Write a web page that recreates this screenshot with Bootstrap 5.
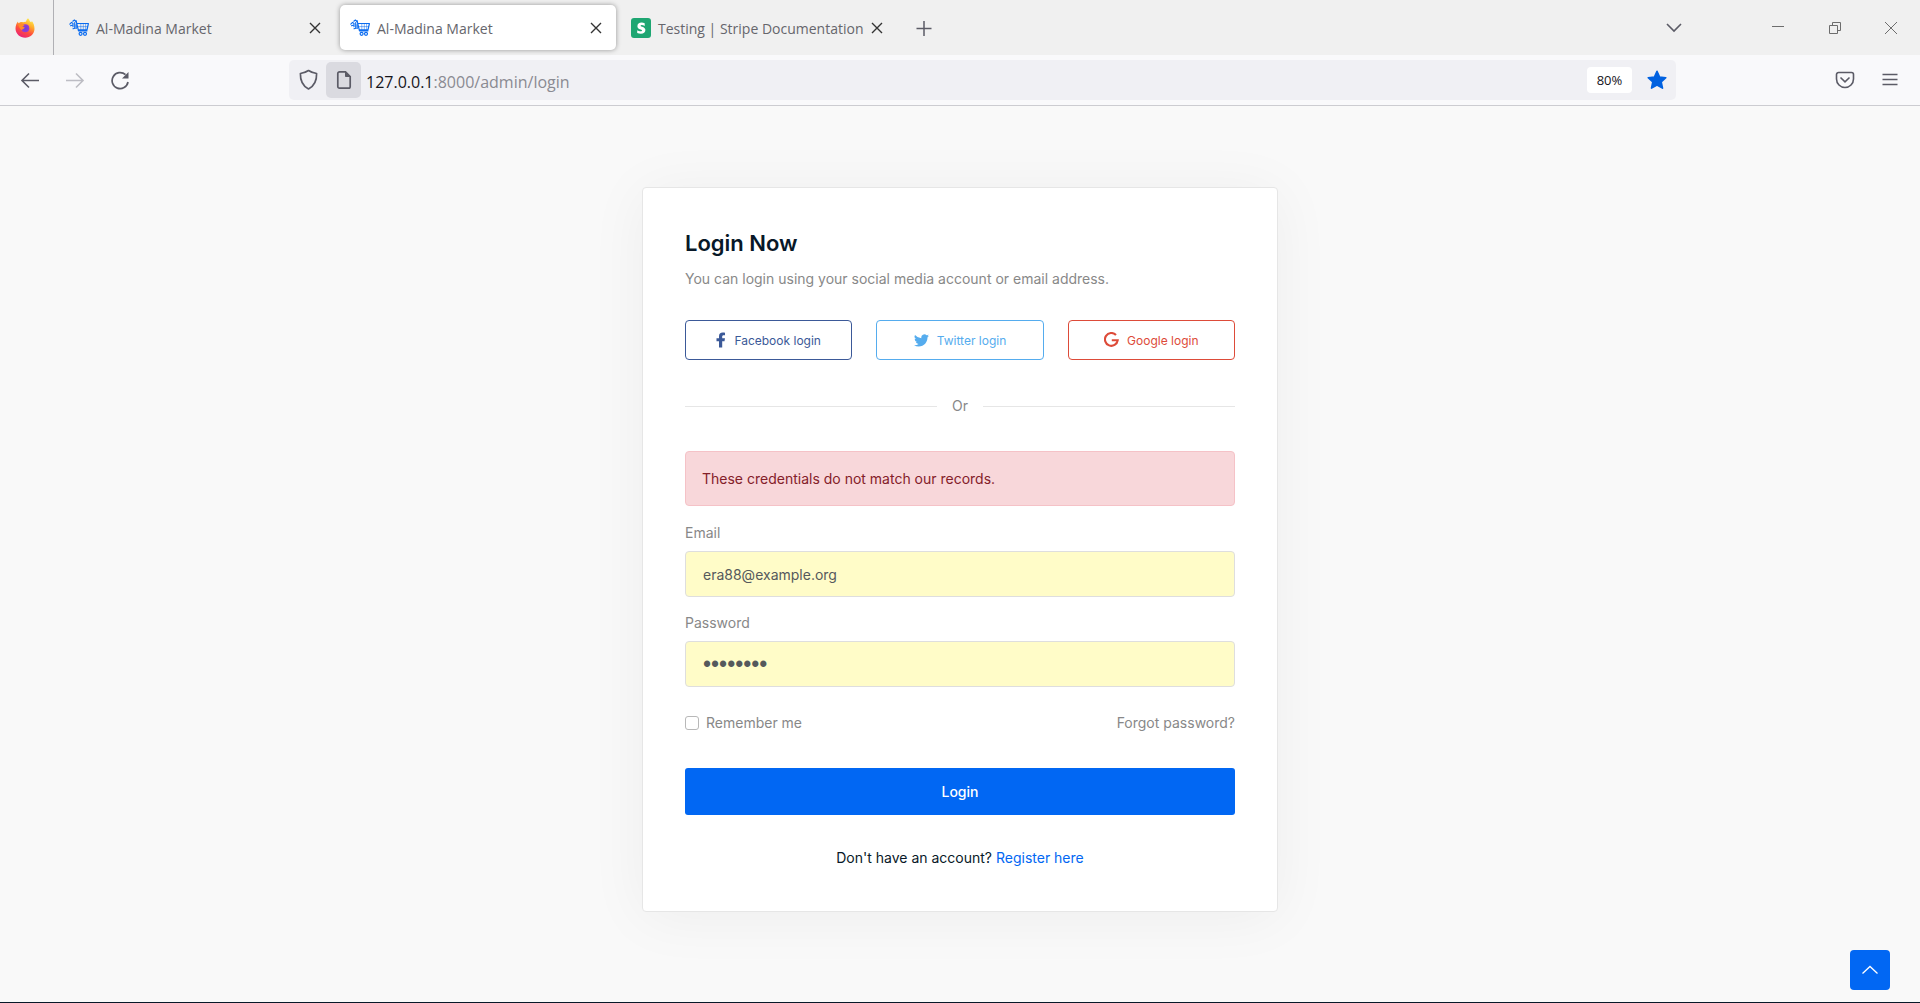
<!DOCTYPE html>
<html lang="en">
<head>
<meta charset="utf-8">
<meta name="viewport" content="width=device-width, initial-scale=1">
<title>Al-Madina Market</title>
<link href="https://cdn.jsdelivr.net/npm/bootstrap@5.3.0/dist/css/bootstrap.min.css" rel="stylesheet">
<style>
  body { font-family: Inter, "Liberation Sans", sans-serif; font-size: 14px; line-height: 22px; color: #888; background: #f9f9f9; border-bottom: 1px solid #081828; }
  svg { display: block; flex: none; }
  .chrome-ui { font-family: "Open Sans", "Noto Sans", sans-serif; color: #5b5b66; }
  .bare-btn { background: none; border: 0; padding: 0; color: inherit; display: flex; align-items: center; justify-content: center; }
  .tab-strip { height: 55px; background: #f0f0f0; }
  .pinned-tab { width: 54px; padding-right: 4px; border-right: 1px solid #b0b0b4; }
  .tab-list { gap: 5px; padding-left: 5px; }
  .browser-tab { width: 276px; height: 45px; padding: 0 13px 0 10px; border-radius: 5px; font-size: 14px; color: #66666c; }
  .browser-tab.is-active { background: #fff; box-shadow: 0 0 5px rgba(0,0,0,.38); }
  .tab-name { padding: 2px 0 0 7px; }
  .tab-close { color: #333; }
  .win-controls { gap: 36px; padding-right: 19px; color: #6d6d6d; }
  .tool-strip { height: 51px; background: #f9f9fb; border-bottom: 1px solid #ccccd1; padding: 0 20px; }
  .nav-set { width: 269px; gap: 25px; }
  .tool-set { width: 224px; gap: 25px; }
  .url-box { height: 40px; background: #f0f0f4; border-radius: 5px; }
  .shield-btn { width: 37px; padding-left: 2px; }
  .site-info { width: 35px; height: 36px; background: #dadae0; border-radius: 5px; }
  .url-text { font-size: 16px; color: #8a8a92; padding: 3px 0 0 5px; }
  .url-text b { font-weight: 400; color: #15141a; }
  .zoom-chip { width: 45px; height: 26px; background: #fff; border-radius: 4px; font-size: 13px; color: #15141a; }
  .star-btn { width: 44px; padding-left: 6px; }
  .page-main { padding: 81px 12px 40px; }
  .login-card { width: 100%; max-width: 636px; border: 1px solid #e6e6e6; border-radius: 4px; padding: 42px; box-shadow: 0 5px 60px rgba(0,0,0,.05); background: #fff; }
  .login-title { font-size: 22px; line-height: 26px; font-weight: 600; color: #081828; margin-bottom: 12px; }
  .social-row { gap: 24px; margin: 30px 0 35px; }
  .social-btn { flex: 1 1 0; height: 40px; font-size: 12px; gap: 8px; border: 1px solid currentColor; border-radius: 4px; text-decoration: none; }
  .social-btn span { padding-top: 1px; }
  .fb { color: #3b5998; } .tw { color: #55acee; } .gg { color: #dd4b39; }
  .or-line { gap: 15px; margin-bottom: 34px; }
  .or-line::before, .or-line::after { content: ""; flex: 1; height: 1px; background: #e6e6e6; }
  .login-error { padding: 16px; border-radius: 4px; margin-bottom: 16px; line-height: 21px; background: #f8d7da; border: 1px solid #f5c2c7; color: #842029; }
  .field-label { margin-bottom: 7px; }
  .field-box.form-control { height: 46px; padding: 0 17px; font-size: 14px; color: #55595c; background: #fffcc8; border: 1px solid #dedede; border-radius: 4px; margin-bottom: 15px; }
  .field-box.form-control[type="password"] { font-family: "Liberation Sans", sans-serif; font-size: 23px; }
  .remember-row { margin: 25px 0 34px; }
  .remember-row input.form-check-input { width: 14px; height: 14px; margin: 0 7px 0 0; border-color: #b8b8b8; border-radius: 3px; }
  .login-btn { height: 47px; font-size: 14px; font-weight: 500; color: #fff; background: #0167f3; border: 0; border-radius: 3px; margin-bottom: 32px; }
  .register-note { color: #081828; }
  .accent-link { color: #0167f3; }
  .to-top { position: fixed; right: 30px; bottom: 13px; width: 40px; height: 40px; color: #fff; background: #0167f3; border-radius: 4px; }
</style>
</head>
<body class="d-flex flex-column min-vh-100">
<svg width="0" height="0" class="position-absolute" aria-hidden="true">
  <defs>
    <symbol id="i-x" viewBox="0 0 14 14"><path d="M2 2l10 10M12 2L2 12" fill="none" stroke="currentColor" stroke-width="1.4"/></symbol>
    <symbol id="i-cart" viewBox="0 0 20 20">
      <g fill="none" stroke="#0b6cf0" stroke-linecap="round" stroke-linejoin="round">
        <path d="M8.500 5.500H19.400L18 11.800H9.500M7 2.500l2.500 10.300h8.500" stroke-width="1.200"/>
        <path d="M11.800 5.500v6M14.300 5.500v6M16.600 5.500v6M9 8.600h9.500" stroke-width=".5"/>
        <path d="M.8 6.200l1.700-1.800 1.200.8M1.500 7.800l1.700-.6M3.800 3.200l1.600-1.200 1.600 1.600M4 5.200v3.600M5.700 4.500v5.200M4 10.800l2-.6M7.200 6.500v4" stroke-width="1.100"/>
        <circle cx="11.600" cy="15.800" r="1.500" stroke-width="1.200"/><circle cx="16" cy="15.800" r="1.500" stroke-width="1.200"/>
      </g>
    </symbol>
  </defs>
</svg>

<header class="chrome-ui">
  <div class="tab-strip d-flex align-items-center">
    <button class="bare-btn pinned-tab h-100" aria-label="Firefox View">
      <svg width="20" height="20" viewBox="0 0 20 20">
        <defs>
          <linearGradient id="ff-a" x1=".8" y1="0" x2=".3" y2="1"><stop offset="0" stop-color="#fff44f"/><stop offset=".35" stop-color="#ffa92b"/><stop offset=".65" stop-color="#ff4f3d"/><stop offset="1" stop-color="#e91e7a"/></linearGradient>
          <radialGradient id="ff-b"><stop offset="0" stop-color="#6b3fe0"/><stop offset="1" stop-color="#9a3bd0"/></radialGradient>
        </defs>
        <path d="M13 .3c1 1 1.600 2.200 2 3.200l1.300.8.600-1.300c1.700 2 2.600 4.800 2.600 8-.2 5-4.200 8.700-9.300 8.700S.6 15.700.5 10.700C.500 8 1.300 5.600 3 3.600c0 .8.200 1.300.6 1.700C5 4 7 3.800 8 4.300c1.300-.5 2-.8 3-.5C11.300 2.300 12 1.200 13 .3z" fill="url(#ff-a)"/>
        <circle cx="10.300" cy="10.300" r="4" fill="url(#ff-b)"/>
        <path d="M3.200 6.500C5.500 5 8 5.600 9.500 7.500c-1 .2-1.700.8-2.200 1.300 1.200 0 2 .4 2.400 1-.8 1.500-2.300 1.300-3.200 2.200-1.500-1-2.500-3-3.300-5.500z" fill="#ff8a2a"/>
      </svg>
    </button>
    <nav class="tab-list d-flex align-items-center" aria-label="Tabs">
      <div class="browser-tab d-flex align-items-center">
        <svg width="20" height="20"><use href="#i-cart"/></svg><span class="tab-name flex-grow-1 text-nowrap">Al-Madina Market</span>
        <button class="bare-btn tab-close" aria-label="Close tab"><svg width="14" height="14"><use href="#i-x"/></svg></button>
      </div>
      <div class="browser-tab is-active d-flex align-items-center">
        <svg width="20" height="20"><use href="#i-cart"/></svg><span class="tab-name flex-grow-1 text-nowrap">Al-Madina Market</span>
        <button class="bare-btn tab-close" aria-label="Close tab"><svg width="14" height="14"><use href="#i-x"/></svg></button>
      </div>
      <div class="browser-tab d-flex align-items-center">
        <svg width="20" height="20" viewBox="0 0 20 20"><rect width="20" height="20" rx="3" fill="#1ea672"/><path d="M13.700 5.200v2.700c-1-.5-2-.8-3-.8-.7 0-1.100.2-1.100.6 0 1.300 4.800.9 4.800 4.400 0 2.400-1.800 3.700-4.500 3.700-1.300 0-2.600-.3-3.700-.8v-2.800c1.100.6 2.500 1.100 3.600 1.100.8 0 1.300-.2 1.300-.7 0-1.500-4.700-1-4.700-4.400 0-2.200 1.700-3.600 4.200-3.600 1.100 0 2.100.2 3.100.6z" fill="#fff"/></svg><span class="tab-name flex-grow-1 text-nowrap">Testing | Stripe Documentation</span>
        <button class="bare-btn tab-close" aria-label="Close tab"><svg width="14" height="14"><use href="#i-x"/></svg></button>
      </div>
    </nav>
    <button class="bare-btn ms-3" aria-label="New tab"><svg width="22" height="22" viewBox="0 0 22 22"><path d="M11 4v15M3.500 11.500h15" fill="none" stroke="currentColor" stroke-width="1.500"/></svg></button>
    <div class="win-controls d-flex align-items-center ms-auto">
      <button class="bare-btn me-5" aria-label="List all tabs"><svg width="20" height="20" viewBox="0 0 20 20"><path d="M2 6l7 7 7-7" fill="none" stroke="#5b5b66" stroke-width="1.600"/></svg></button>
      <button class="bare-btn" aria-label="Minimize"><svg width="20" height="20" viewBox="0 0 20 20"><path d="M3 8.500h12" stroke="currentColor"/></svg></button>
      <button class="bare-btn" aria-label="Restore"><svg width="20" height="20" viewBox="0 0 20 20"><path d="M4.500 7.500h8v8h-8zM7.500 7.500v-3h8v8h-3" fill="none" stroke="currentColor"/></svg></button>
      <button class="bare-btn" aria-label="Close window"><svg width="20" height="20" viewBox="0 0 20 20"><path d="M4 4l12 12M16 4L4 16" fill="none" stroke="currentColor"/></svg></button>
    </div>
  </div>

  <div class="tool-strip d-flex align-items-center">
    <div class="nav-set d-flex align-items-center flex-shrink-0">
      <button class="bare-btn" aria-label="Back"><svg width="20" height="20" viewBox="0 0 20 20"><path d="M19 10.500H2M9 3.500l-7 7 7 7" fill="none" stroke="currentColor" stroke-width="1.600"/></svg></button>
      <button class="bare-btn" aria-label="Forward"><svg width="20" height="20" viewBox="0 0 20 20"><path d="M1 10.500h17M11 3.500l7 7-7 7" fill="none" stroke="#bdbdc4" stroke-width="1.600"/></svg></button>
      <button class="bare-btn" aria-label="Reload"><svg width="20" height="20" viewBox="0 0 20 20"><path d="M18 12A8 8 0 1 1 15.500 4.700" fill="none" stroke="currentColor" stroke-width="1.700"/><path d="M18.500 2V8.500H12z" fill="currentColor"/></svg></button>
    </div>
    <div class="url-box d-flex align-items-center flex-grow-1">
      <button class="bare-btn shield-btn" aria-label="Tracking protection"><svg width="21" height="22" viewBox="0 0 21 22"><path d="M10.500 1.500c2.500 1.700 5 2.600 8.100 3 .2 6.500-2 12.300-8.100 15.500C4.400 16.800 2.200 11 2.400 4.500c3.100-.4 5.600-1.300 8.100-3z" fill="none" stroke="currentColor" stroke-width="1.700" stroke-linejoin="round"/></svg></button>
      <button class="bare-btn site-info" aria-label="Site information"><svg width="16" height="20" viewBox="0 0 16 20"><path d="M3.500 1.800H9.500L14.200 6.500V16.500a1.700 1.700 0 0 1-1.700 1.700h-9A1.700 1.700 0 0 1 1.800 16.500V3.500A1.700 1.700 0 0 1 3.500 1.800z" fill="none" stroke="currentColor" stroke-width="1.700"/><path d="M9.500 2V6.500h4.700z" fill="currentColor" stroke="currentColor"/></svg></button>
      <span class="url-text flex-grow-1"><b>127.0.0.1</b>:8000/admin/login</span>
      <button class="bare-btn zoom-chip" aria-label="Reset zoom level">80%</button>
      <button class="bare-btn star-btn" aria-label="Bookmark"><svg width="20" height="20" viewBox="0 0 20 20"><path d="M10 1.300l2.600 5.700 6.200.7-4.600 4.200 1.300 6.200L10 15l-5.500 3.100 1.300-6.200L1.200 7.700l6.200-.7z" fill="#0061e0" stroke="#0061e0" stroke-width="1.600" stroke-linejoin="round"/></svg></button>
    </div>
    <div class="tool-set d-flex align-items-center justify-content-end flex-shrink-0">
      <button class="bare-btn" aria-label="Save to Pocket"><svg width="20" height="20" viewBox="0 0 20 20"><path d="M3.500 2.500h13a2 2 0 0 1 2 2V9a8.500 8.500 0 0 1-17 0V4.500a2 2 0 0 1 2-2z" fill="none" stroke="currentColor" stroke-width="1.600"/><path d="M5.500 7.500L10 11.800l4.500-4.300" fill="none" stroke="currentColor" stroke-width="1.600"/></svg></button>
      <button class="bare-btn" aria-label="Menu"><svg width="20" height="20" viewBox="0 0 20 20"><path d="M2.500 4.500h15M2.500 9.500h15M2.500 14.500h15" stroke="currentColor" stroke-width="1.500"/></svg></button>
    </div>
  </div>
</header>

<main class="page-main d-flex flex-grow-1 justify-content-center align-items-start">
  <form class="login-card" onsubmit="return false">
    <h1 class="login-title">Login Now</h1>
    <p class="mb-0">You can login using your social media account or email address.</p>
    <div class="social-row d-flex">
      <a class="social-btn fb d-flex align-items-center justify-content-center" href="#"><svg width="10" height="16" viewBox="0 0 10 16"><path d="M3 15.500V9.300H.500V6.300H3V4.200C3 1.800 4.400.500 6.700.500c1 0 2.300.2 2.300.2v2.500H7.700C6.600 3.200 6.200 3.800 6.200 4.500v1.800H9L8.500 9.300H6.200v6.200z" fill="currentColor"/></svg><span>Facebook login</span></a>
      <a class="social-btn tw d-flex align-items-center justify-content-center" href="#"><svg width="15" height="16" viewBox="0 0 16 16"><path d="M5.026 15c6.038 0 9.341-5.003 9.341-9.334q.002-.211-.006-.422A6.700 6.700 0 0 0 16 3.542a6.700 6.700 0 0 1-1.889.518 3.300 3.300 0 0 0 1.447-1.817 6.500 6.500 0 0 1-2.087.793A3.286 3.286 0 0 0 7.875 6.030a9.320 9.320 0 0 1-6.767-3.429 3.290 3.290 0 0 0 1.018 4.382A3.300 3.300 0 0 1 .640 6.575v.045a3.290 3.290 0 0 0 2.632 3.218 3.200 3.200 0 0 1-.865.115 3 3 0 0 1-.614-.057 3.280 3.280 0 0 0 3.067 2.277A6.600 6.600 0 0 1 .780 13.580a6 6 0 0 1-.780-.045A9.340 9.340 0 0 0 5.026 15" fill="currentColor"/></svg><span>Twitter login</span></a>
      <a class="social-btn gg d-flex align-items-center justify-content-center" href="#"><svg width="15" height="16" viewBox="0 0 15 16"><path d="M12 3A6.400 6.400 0 1 0 13.700 8.300H7.800" fill="none" stroke="currentColor" stroke-width="2.100"/></svg><span>Google login</span></a>
    </div>
    <div class="or-line d-flex align-items-center">Or</div>
    <div class="login-error" role="alert">These credentials do not match our records.</div>
    <label class="field-label d-block" for="email">Email</label>
    <input class="form-control field-box" id="email" type="email" value="era88@example.org">
    <label class="field-label d-block" for="password">Password</label>
    <input class="form-control field-box" id="password" type="password" value="password">
    <div class="remember-row d-flex justify-content-between align-items-center">
      <div class="d-flex align-items-center"><input class="form-check-input" type="checkbox" id="remember"><label for="remember">Remember me</label></div>
      <a class="text-reset text-decoration-none" href="#">Forgot password?</a>
    </div>
    <button class="login-btn w-100 d-block" type="submit">Login</button>
    <p class="register-note text-center mb-0">Don't have an account? <a class="accent-link text-decoration-none" href="#">Register here</a></p>
  </form>
</main>
<a class="to-top d-flex align-items-center justify-content-center" href="#" aria-label="Back to top"><svg width="18" height="18" viewBox="0 0 18 18"><path d="M1.500 12.500L9 5.500l7.500 7" fill="none" stroke="currentColor" stroke-width="1.300"/></svg></a>
<script src="https://cdn.jsdelivr.net/npm/bootstrap@5.3.0/dist/js/bootstrap.bundle.min.js"></script>
</body>
</html>
